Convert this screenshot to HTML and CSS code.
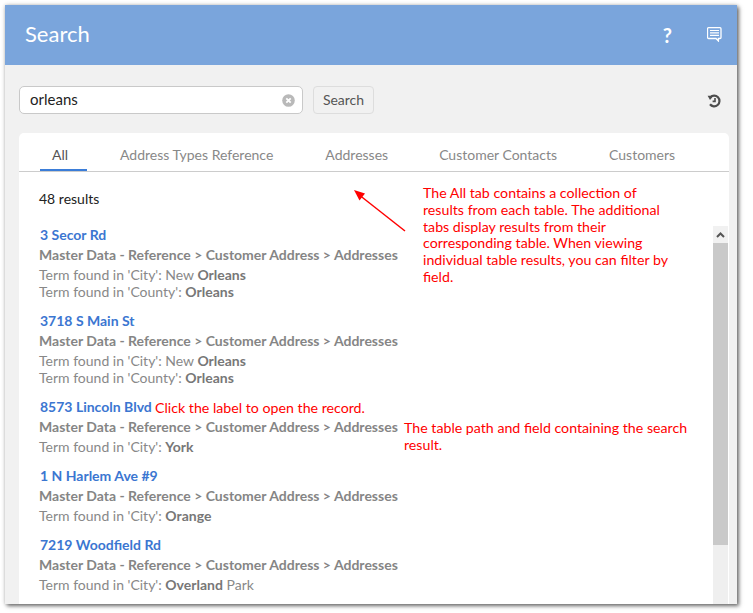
FILE: index.html
```html
<!DOCTYPE html>
<html lang="en">
<head>
<meta charset="utf-8">
<title>Search</title>
<link rel="stylesheet" href="styles.css">
</head>
<body>
<div class="window">
  <header class="header">
    <h1 class="title">Search</h1>
    <div class="header-icons">
      <span class="help">?</span>
      <svg class="chat" width="15" height="15" viewBox="0 0 15 15"><path d="M1.500 .7H13a1 1 0 0 1 1 1V10.500a1 1 0 0 1-1 1h-1.600v2.500L9 11.500H1.500a1 1 0 0 1-1-1V1.700a1 1 0 0 1 1-1z" fill="none" stroke="#fff" stroke-width="1.300"/><path d="M3 3.500h9M3 5.900h9M3 8.300h9" stroke="#fff" stroke-width="1.200"/></svg>
    </div>
  </header>
  <main class="content">
    <div class="searchbar">
      <div class="input">
        <span class="query">orleans</span>
        <svg width="13" height="13" viewBox="0 0 13 13"><circle cx="6.500" cy="6.500" r="6.300" fill="#b9b9b9"/><path d="M4.300 4.300l4.400 4.400M8.700 4.300l-4.400 4.400" stroke="#fff" stroke-width="1.800"/></svg>
      </div>
      <button class="btn">Search</button>
      <svg class="history" width="15" height="14" viewBox="0 0 15 14"><path d="M3.300 3.400A5.300 5.300 0 1 1 3 10.300" fill="none" stroke="#4d4d4d" stroke-width="2.200"/><path d="M.6 1.800h5.800L3 6z" fill="#4d4d4d"/><path d="M8 4v3.400H5.600" fill="none" stroke="#4d4d4d" stroke-width="1.600"/></svg>
    </div>
    <section class="card">
      <nav class="tabs">
        <a class="tab tab-active">All</a>
        <a class="tab">Address Types Reference</a>
        <a class="tab">Addresses</a>
        <a class="tab">Customer Contacts</a>
        <a class="tab">Customers</a>
      </nav>
      <div class="count">48 results</div>
      <div class="body">
        <div class="results">
          <article class="result">
            <a class="label">3 Secor Rd</a>
            <div class="path">Master Data - Reference &gt; Customer Address &gt; Addresses</div>
            <div class="term">Term found in 'City': New <b>Orleans</b></div>
            <div class="term">Term found in 'County': <b>Orleans</b></div>
          </article>
          <article class="result">
            <a class="label">3718 S Main St</a>
            <div class="path">Master Data - Reference &gt; Customer Address &gt; Addresses</div>
            <div class="term">Term found in 'City': New <b>Orleans</b></div>
            <div class="term">Term found in 'County': <b>Orleans</b></div>
          </article>
          <article class="result">
            <a class="label">8573 Lincoln Blvd</a>
            <div class="path">Master Data - Reference &gt; Customer Address &gt; Addresses</div>
            <div class="term">Term found in 'City': <b>York</b></div>
          </article>
          <article class="result">
            <a class="label">1 N Harlem Ave #9</a>
            <div class="path">Master Data - Reference &gt; Customer Address &gt; Addresses</div>
            <div class="term">Term found in 'City': <b>Orange</b></div>
          </article>
          <article class="result">
            <a class="label">7219 Woodfield Rd</a>
            <div class="path">Master Data - Reference &gt; Customer Address &gt; Addresses</div>
            <div class="term">Term found in 'City': <b>Overland</b> Park</div>
          </article>
        </div>
        <div class="scrollbar">
          <div class="scroll-up"><svg width="9" height="6" viewBox="0 0 9 6"><path d="M1 5l3.500-3.500L8 5" fill="none" stroke="#555" stroke-width="2"/></svg></div>
          <div class="scroll-thumb"></div>
        </div>
      </div>
    </section>
  </main>
  <svg class="arrow" width="60" height="50" viewBox="0 0 60 50"><path d="M54 42L7 5" stroke="#f00" stroke-width="1.500"/><path d="M3 1l11 3.500-5.500 7z" fill="#f00"/></svg>
  <p class="note note-tabs">The All tab contains a collection of results from each table. The additional tabs display results from their corresponding table. When viewing individual table results, you can filter by field.</p>
  <p class="note note-label">Click the label to open the record.</p>
  <p class="note note-path">The table path and field containing the search result.</p>
</div>
</body>
</html>
```
FILE: styles.css
```css
* { box-sizing: border-box; }
html, body { margin: 0; height: 100%; background: #fff; overflow: hidden; }
body { font-family: Lato, sans-serif; font-size: 14px; padding: 5px 0 0 5px; }
.window {
  position: relative;
  width: 732px;
  height: 599px;
  background: #f1f1f1;
  display: flex;
  flex-direction: column;
  box-shadow: 2px 2px 4px rgba(0,0,0,.55), 0 0 4px rgba(0,0,0,.2);
}
.header {
  height: 60px;
  flex: none;
  background: #7aa5dc;
  display: flex;
  align-items: center;
  justify-content: space-between;
  padding: 0 15px 0 20px;
}
.title { margin: -4px 0 0; font-size: 22px; font-weight: 400; color: #fff; }
.header-icons { display: flex; align-items: center; gap: 35px; margin-top: -1px; }
.help { font-size: 20px; line-height: 24px; font-weight: 700; color: #fff; }
.chat { display: block; }
.content { flex: 1; min-height: 0; padding: 21px 8px 0 14px; display: flex; flex-direction: column; }
.searchbar { display: flex; align-items: center; height: 28px; flex: none; }
.input {
  width: 284px;
  height: 28px;
  background: #fff;
  border: 1px solid #c9c9c9;
  border-radius: 5px;
  display: flex;
  align-items: center;
  justify-content: space-between;
  padding: 0 7px 0 10px;
}
.query { font-size: 15px; line-height: 24px; margin-top: -2px; color: #222; }
.btn {
  margin-left: 10px;
  width: 61px;
  height: 28px;
  padding: 0 0 2px;
  background: #f1f1f1;
  border: 1px solid #ddd;
  border-radius: 4px;
  font: 14px Lato, sans-serif;
  color: #555;
}
.history { margin: 2px 7px 0 auto; }
.card {
  margin-top: 19px;
  flex: 1;
  min-height: 0;
  background: #fff;
  border-radius: 5px 5px 0 0;
  display: flex;
  flex-direction: column;
  overflow: hidden;
}
.tabs {
  height: 39px;
  flex: none;
  display: flex;
  padding-left: 21px;
  border-bottom: 1px solid #ccc;
}
.tab {
  height: 38px;
  line-height: 44px;
  color: #888;
  white-space: nowrap;
}
.tab-active { color: #555; border-bottom: 2px solid #3b7dd8; margin-right: 33px; padding: 0 19px 0 12px; width: 47px; height: 38px; }
.tab:nth-child(2) { margin-right: 52px; }
.tab:nth-child(3) { margin-right: 51px; }
.tab:nth-child(4) { margin-right: 52px; }
.count { flex: none; height: 53px; padding: 17px 0 0 20px; line-height: 20px; color: #222; }
.body { flex: 1; min-height: 0; display: flex; justify-content: space-between; }
.results { padding: 0 0 0 20px; }
.result { margin-bottom: 11px; }
.label { display: block; line-height: 20px; font-weight: 700; color: #3b76d1; margin-left: 1px; }
.path { line-height: 20px; margin-bottom: 1px; font-weight: 700; color: #858585; white-space: nowrap; }
.term { line-height: 17px; color: #888; }
.term b { color: #777; }
.scrollbar { width: 15px; margin: 1px 1px 0 0; background: #efefef; flex: none; }
.scroll-up { height: 17px; background: #f1f1f1; display: flex; align-items: center; justify-content: center; }
.scroll-up svg { display: block; }
.scroll-thumb { height: 302px; background: #c9c9c9; }
.arrow { position: absolute; left: 346px; top: 184px; }
.note { position: absolute; margin: 0; color: #f00; line-height: 16.800px; font-size: 14.200px; }
.note-tabs { left: 418px; top: 180px; width: 252px; }
.note-label { left: 150px; top: 395px; white-space: nowrap; }
.note-path { left: 399px; top: 415px; width: 300px; }
```
